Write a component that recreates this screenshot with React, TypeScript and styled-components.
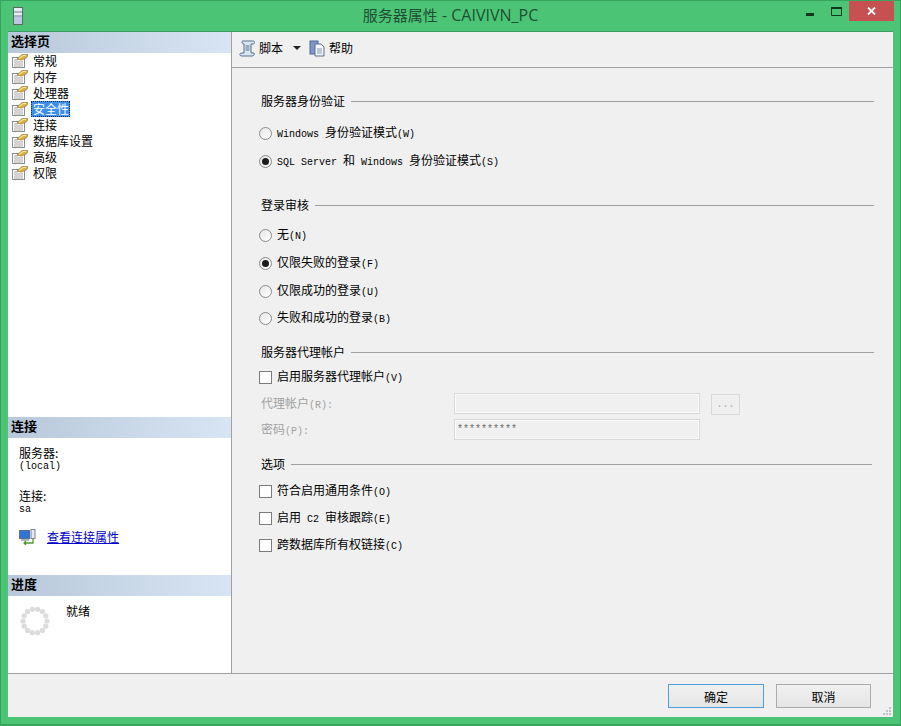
import styled, { createGlobalStyle } from "styled-components";

const CJK = `"Noto Sans CJK SC", "Liberation Sans", sans-serif`;

const GlobalStyle = createGlobalStyle`
  html, body {
    margin: 0;
    padding: 0;
    background: #4cc476;
  }
  * {
    box-sizing: border-box;
  }
`;

const Frame = styled.div`
  width: 901px;
  height: 726px;
  display: flex;
  flex-direction: column;
  background: #4cc476;
  border: 1px solid #38a45e;
  border-bottom-width: 2px;
  font-family: ${CJK};
  font-size: 12px;
  color: #000;
  overflow: hidden;
`;

const TitleBar = styled.div`
  height: 30px;
  flex-shrink: 0;
  display: flex;
  position: relative;
  justify-content: center;
  padding-top: 4px;
`;

const TitleIcon = styled.svg`
  position: absolute;
  left: 12px;
  top: 6px;
`;

const TitleText = styled.div`
  font-size: 15px;
  line-height: 20px;
  color: #1f4f33;
`;

const TitleLatin = styled.span`
  font-family: "Open Sans", sans-serif;
  font-size: 16px;
`;

const WindowControls = styled.div`
  position: absolute;
  top: 0;
  right: 6px;
  display: flex;
  align-items: flex-start;
`;

const ControlButton = styled.div`
  width: 26px;
  height: 20px;
  display: flex;
  align-items: center;
  justify-content: center;
`;

const CloseButton = styled.div`
  width: 45px;
  height: 20px;
  background: #c75050;
  display: flex;
  align-items: center;
  justify-content: center;
`;

const Client = styled.div`
  flex: 1;
  margin: 0 7px 7px 7px;
  background: #f0f0f0;
  display: flex;
  flex-direction: column;
  border-top: 1px solid #3e9d62;
`;

const Main = styled.div`
  flex: 1;
  display: flex;
  min-height: 0;
`;

const LeftPane = styled.div`
  width: 224px;
  flex-shrink: 0;
  background: #fff;
  border-right: 1px solid #a0a0a0;
  display: flex;
  flex-direction: column;
`;

const PaneHeader = styled.div`
  height: 21px;
  flex-shrink: 0;
  padding-left: 3px;
  background: linear-gradient(90deg, #b8c8da 0%, #d8e5f3 100%);
  font-size: 13px;
  line-height: 18px;
  font-weight: 700;
`;

const PageList = styled.div`
  height: 364px;
  flex-shrink: 0;
`;

const PageRow = styled.div`
  height: 16px;
  display: flex;
  align-items: center;
  padding-left: 4px;
`;

const PageLabel = styled.span<{ $selected?: boolean }>`
  height: 16px;
  line-height: 15px;
  padding: 0 1px 0 2px;
  margin-left: 3px;
  color: ${(p) => (p.$selected ? "#fff" : "#000")};
  background: ${(p) => (p.$selected ? "#3f8fe9" : "transparent")};
  outline: ${(p) => (p.$selected ? "1px dotted #102a50" : "none")};
  outline-offset: -1px;
`;

const ConnectionInfo = styled.div`
  height: 137px;
  flex-shrink: 0;
  padding: 8px 0 0 11px;
`;

const InfoBlock = styled.div<{ $after: number }>`
  margin-bottom: ${(p) => p.$after}px;
`;

const InfoLabel = styled.div`
  height: 13px;
  line-height: 13px;
`;

const InfoValue = styled.div`
  height: 13px;
  padding-top: 2px;
  font-family: "Liberation Mono", monospace;
  font-size: 10px;
  line-height: 11px;
`;

const LinkRow = styled.div`
  display: flex;
  align-items: center;
  gap: 11px;
`;

const PropertyLink = styled.a`
  color: #0000c8;
  text-decoration: underline;
  line-height: 16px;
`;

const ProgressBody = styled.div`
  flex: 1;
  display: flex;
  padding: 8px 0 0 10px;
`;

const SpinnerIcon = styled.svg`
  margin: 2px 0 0 2px;
`;

const ReadyText = styled.span`
  margin-left: 16px;
  line-height: 14px;
`;

const RightPane = styled.div`
  flex: 1;
  display: flex;
  flex-direction: column;
`;

const Toolbar = styled.div`
  height: 36px;
  flex-shrink: 0;
  display: flex;
  align-items: center;
  padding: 0 0 3px 7px;
  border-bottom: 1px solid #a0a0a0;
`;

const ToolItem = styled.span`
  margin: 0 0 2px 3px;
`;

const DropArrow = styled.span`
  width: 0;
  height: 0;
  margin: 0 8px 0 10px;
  border-left: 4px solid transparent;
  border-right: 4px solid transparent;
  border-top: 4px solid #222;
`;

const Form = styled.div`
  flex: 1;
  padding: 25px 19px 0 27px;
`;

const Heading = styled.div<{ $top: number; $end?: number }>`
  height: 16px;
  line-height: 14px;
  display: flex;
  align-items: center;
  gap: 6px;
  margin-top: ${(p) => p.$top}px;
  margin-right: ${(p) => p.$end ?? 0}px;
  padding-left: 2px;
  &::after {
    content: "";
    flex: 1;
    height: 1px;
    background: #a0a0a0;
  }
`;

const OptionRow = styled.div<{ $top?: number; $tight?: boolean }>`
  height: ${(p) => (p.$tight ? 27 : 28)}px;
  display: flex;
  align-items: center;
  margin-top: ${(p) => p.$top ?? 0}px;
`;

const OptionText = styled.span`
  white-space: pre;
  line-height: 14px;
`;

const Radio = styled.span<{ $on?: boolean }>`
  width: 13px;
  height: 13px;
  margin-right: 5px;
  border: 1px solid #8a8a8a;
  border-radius: 50%;
  background: linear-gradient(135deg, #e6e6e6, #fff);
  display: flex;
  align-items: center;
  justify-content: center;
  &::after {
    content: "";
    width: 7px;
    height: 7px;
    border-radius: 50%;
    background: ${(p) => (p.$on ? "#1c1c1c" : "transparent")};
  }
`;

const Check = styled.span`
  width: 13px;
  height: 13px;
  margin-right: 5px;
  border: 1px solid #7c7c7c;
  background: #fff;
`;

const Latin = styled.span`
  font-family: "Liberation Mono", monospace;
  font-size: 10px;
`;

const FieldRow = styled.div`
  height: 26px;
  display: grid;
  grid-template-columns: 184px 246px 29px;
  column-gap: 11px;
  align-items: center;
  white-space: pre;
`;

const FieldLabel = styled.span`
  padding-left: 2px;
  line-height: 14px;
  color: #a0a0a0;
`;

const TextField = styled.div`
  height: 21px;
  align-self: start;
  margin-top: 2px;
  background: #f0f0f0;
  border: 1px solid #d9d9d9;
  box-shadow: inset 0 0 0 1px #fbfbfb;
  padding-left: 2px;
  font-family: "Liberation Mono", monospace;
  font-size: 10px;
  line-height: 19px;
  color: #6d6d6d;
`;

const EllipsisButton = styled.div`
  height: 21px;
  border: 1px solid #d9d9d9;
  background: #efefef;
  text-align: center;
  font-family: "Liberation Mono", monospace;
  font-size: 10px;
  line-height: 19px;
  color: #a8a8a8;
`;

const Footer = styled.div`
  height: 44px;
  flex-shrink: 0;
  border-top: 1px solid #a0a0a0;
  position: relative;
  display: flex;
  justify-content: flex-end;
  gap: 12px;
  padding: 10px 22px 0 0;
`;

const DialogButton = styled.button<{ $primary?: boolean }>`
  height: 24px;
  width: ${(p) => (p.$primary ? 96 : 95)}px;
  padding: 0;
  font-family: ${CJK};
  font-size: 12px;
  color: #000;
  background: linear-gradient(180deg, #f0f0f0, #e5e5e5);
  border: 1px solid ${(p) => (p.$primary ? "#4d9fdc" : "#acacac")};
`;

const Grip = styled.svg`
  position: absolute;
  right: 1px;
  bottom: 1px;
`;

function PageIcon() {
  return (
    <svg width="16" height="16" viewBox="0 0 16 16">
      <rect x="0.5" y="4.5" width="12" height="10" fill="#fff" stroke="#8f8f8f" />
      <path d="M2 7h4M2 9h9M2 11h9M2 13h9" stroke="#a8a8a8" />
      <path d="M5 6 10 1.500 16 1.500 15 4.500 10 7 8 7Z" fill="#d9b44a" stroke="#8a6f1d" strokeWidth="0.6" />
      <path d="M7 5.500l4-3h3" stroke="#fbeaa6" fill="none" />
    </svg>
  );
}

function ScriptIcon() {
  return (
    <svg width="17" height="17" viewBox="0 0 17 17">
      <path d="M4 1H14C16 1 16 4 14 4H12V13H15C16 15 14 16 13 16H3C0 16 0 13 3 13H5V4C3 4 2 1 4 1Z" fill="#dce6f2" stroke="#54708f" />
      <path d="M6.500 6h4M6.500 8h4M6.500 10h4" stroke="#54708f" />
    </svg>
  );
}

function HelpIcon() {
  return (
    <svg width="17" height="17" viewBox="0 0 17 17">
      <rect x="1" y="1" width="8" height="13" fill="#7f97c6" stroke="#4d669c" />
      <path d="M6 4h6l3 3v9H6Z" fill="#f4f6fb" stroke="#5d6c8c" />
      <path d="M8 9h5M8 11h5M8 13h5" stroke="#8a97b3" />
    </svg>
  );
}

function ConnectionIcon() {
  return (
    <svg width="17" height="16" viewBox="0 0 17 16">
      <rect x="0.5" y="1.500" width="10" height="8" fill="#2f74d8" stroke="#5c6f8a" />
      <rect x="2" y="10" width="8" height="2" fill="#a9b4c4" />
      <rect x="12" y="0.5" width="4" height="9" fill="#e6e9ee" stroke="#7c8694" />
      <path d="M14 10v4H5M7 12l-2 2 2 2" fill="none" stroke="#4f9a2f" strokeWidth="1.300" />
    </svg>
  );
}

function Spinner() {
  const dots = Array.from({ length: 14 }, (_, i) => (i * Math.PI * 2) / 14);
  return (
    <SpinnerIcon width="30" height="30" viewBox="0 0 30 30">
      {dots.map((a) => (
        <circle key={a} cx={15 + 12 * Math.cos(a)} cy={15 + 12 * Math.sin(a)} r="2.600" fill="#dcdcdc" />
      ))}
    </SpinnerIcon>
  );
}

const pages = ["常规", "内存", "处理器", "安全性", "连接", "数据库设置", "高级", "权限"];

export default function App() {
  return (
    <Frame>
      <GlobalStyle />
      <TitleBar>
        <TitleIcon width="10" height="18" viewBox="0 0 10 18">
          <rect x="0.5" y="0.5" width="9" height="17" fill="#e8ecf4" stroke="#5a6b5e" />
          <path d="M1 5h8M1 9h8" stroke="#6f7f99" />
          <rect x="1" y="10" width="8" height="7" fill="#bcc6e6" />
        </TitleIcon>
        <TitleText>
          服务器属性<TitleLatin> - CAIVIVN_PC</TitleLatin>
        </TitleText>
        <WindowControls>
          <ControlButton>
            <svg width="8" height="10" viewBox="0 0 8 10">
              <rect x="0" y="7" width="8" height="3" fill="#12351f" />
            </svg>
          </ControlButton>
          <ControlButton>
            <svg width="11" height="9" viewBox="0 0 11 9">
              <path d="M0.500 1h10v7.500H0.500Z" fill="none" stroke="#12351f" />
              <path d="M0 1h11" stroke="#12351f" strokeWidth="2" />
            </svg>
          </ControlButton>
          <CloseButton>
            <svg width="9" height="8" viewBox="0 0 9 8">
              <path d="M1 0.500 8 7.500M8 0.500 1 7.500" stroke="#fff" strokeWidth="1.800" />
            </svg>
          </CloseButton>
        </WindowControls>
      </TitleBar>
      <Client>
        <Main>
          <LeftPane>
            <PaneHeader>选择页</PaneHeader>
            <PageList>
              {pages.map((page) => (
                <PageRow key={page}>
                  <PageIcon />
                  <PageLabel $selected={page === "安全性"}>{page}</PageLabel>
                </PageRow>
              ))}
            </PageList>
            <PaneHeader>连接</PaneHeader>
            <ConnectionInfo>
              <InfoBlock $after={17}>
                <InfoLabel>服务器:</InfoLabel>
                <InfoValue>(local)</InfoValue>
              </InfoBlock>
              <InfoBlock $after={14}>
                <InfoLabel>连接:</InfoLabel>
                <InfoValue>sa</InfoValue>
              </InfoBlock>
              <LinkRow>
                <ConnectionIcon />
                <PropertyLink>查看连接属性</PropertyLink>
              </LinkRow>
            </ConnectionInfo>
            <PaneHeader>进度</PaneHeader>
            <ProgressBody>
              <Spinner />
              <ReadyText>就绪</ReadyText>
            </ProgressBody>
          </LeftPane>
          <RightPane>
            <Toolbar>
              <ScriptIcon />
              <ToolItem>脚本</ToolItem>
              <DropArrow />
              <HelpIcon />
              <ToolItem>帮助</ToolItem>
            </Toolbar>
            <Form>
              <Heading $top={0}>服务器身份验证</Heading>
              <OptionRow $top={10}>
                <Radio />
                <OptionText><Latin>Windows </Latin>身份验证模式<Latin>(W)</Latin></OptionText>
              </OptionRow>
              <OptionRow>
                <Radio $on />
                <OptionText><Latin>SQL Server </Latin>和<Latin> Windows </Latin>身份验证模式<Latin>(S)</Latin></OptionText>
              </OptionRow>
              <Heading $top={22}>登录审核</Heading>
              <OptionRow $top={8}>
                <Radio />
                <OptionText>无<Latin>(N)</Latin></OptionText>
              </OptionRow>
              <OptionRow>
                <Radio $on />
                <OptionText>仅限失败的登录<Latin>(F)</Latin></OptionText>
              </OptionRow>
              <OptionRow>
                <Radio />
                <OptionText>仅限成功的登录<Latin>(U)</Latin></OptionText>
              </OptionRow>
              <OptionRow $tight>
                <Radio />
                <OptionText>失败和成功的登录<Latin>(B)</Latin></OptionText>
              </OptionRow>
              <Heading $top={12}>服务器代理帐户</Heading>
              <OptionRow $top={3}>
                <Check />
                <OptionText>启用服务器代理帐户<Latin>(V)</Latin></OptionText>
              </OptionRow>
              <FieldRow>
                <FieldLabel>代理帐户<Latin>(R):</Latin></FieldLabel>
                <TextField />
                <EllipsisButton>...</EllipsisButton>
              </FieldRow>
              <FieldRow>
                <FieldLabel>密码<Latin>(P):</Latin></FieldLabel>
                <TextField>**********</TextField>
              </FieldRow>
              <Heading $top={13} $end={2}>选项</Heading>
              <OptionRow $top={5}>
                <Check />
                <OptionText>符合启用通用条件<Latin>(O)</Latin></OptionText>
              </OptionRow>
              <OptionRow $tight>
                <Check />
                <OptionText>启用<Latin> C2 </Latin>审核跟踪<Latin>(E)</Latin></OptionText>
              </OptionRow>
              <OptionRow $tight>
                <Check />
                <OptionText>跨数据库所有权链接<Latin>(C)</Latin></OptionText>
              </OptionRow>
            </Form>
          </RightPane>
        </Main>
        <Footer>
          <DialogButton $primary>确定</DialogButton>
          <DialogButton>取消</DialogButton>
          <Grip width="10" height="10" viewBox="0 0 10 10">
            <path d="M7 1h2v2H7ZM4 4h2v2H4ZM7 4h2v2H7ZM1 7h2v2H1ZM4 7h2v2H4ZM7 7h2v2H7Z" fill="#c4c4c4" />
          </Grip>
        </Footer>
      </Client>
    </Frame>
  );
}
